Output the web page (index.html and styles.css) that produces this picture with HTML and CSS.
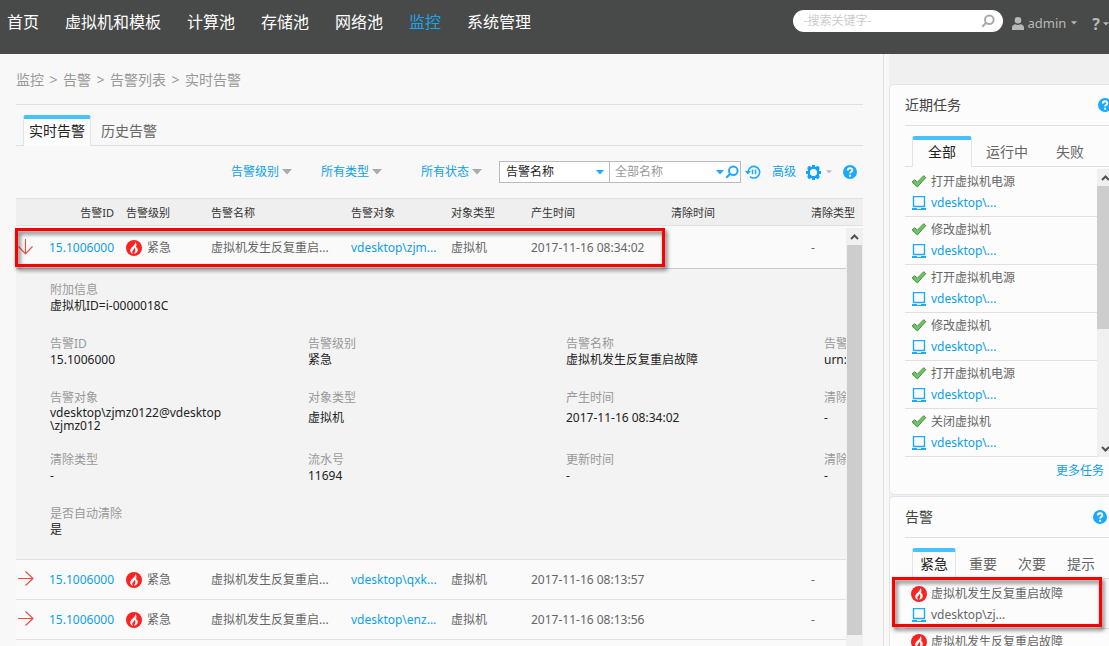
FILE: index.html
```html
<!DOCTYPE html>
<html lang="zh-CN">
<head>
<meta charset="utf-8">
<title>实时告警</title>
<link rel="stylesheet" href="styles.css">
</head>
<body>
<svg class="defs" aria-hidden="true">
  <symbol id="caret" viewBox="0 0 10 6"><path d="M0 0h10L5 5.500z" fill="currentColor"/></symbol>
  <symbol id="search" viewBox="0 0 14 14"><circle cx="8.300" cy="5.700" r="4.300" fill="none" stroke="currentColor" stroke-width="2"/><path d="M5.200 8.800 1.300 12.700" stroke="currentColor" stroke-width="2.200"/></symbol>
  <symbol id="help" viewBox="0 0 14 14"><circle cx="7" cy="7" r="7" fill="#1eaafc"/><path d="M4.800 5.500c0-3 4.600-2.900 4.600-.2 0 1.500-2.300 1.600-2.300 3.300" fill="none" stroke="#fff" stroke-width="1.800"/><path d="M6.100 9.800h2v1.900h-2z" fill="#fff"/></symbol>
  <symbol id="fire" viewBox="0 0 16 16"><circle cx="8" cy="8" r="8" fill="#fb2222"/><path d="M9.200 2c.3 1.500-.4 2.300-1.500 3.600C6 7.300 4 8.600 4.200 10.700c.1 1.600 1.200 2.700 3 3.100-1-.9-1.300-2.100-.4-3.300.7-1 1.600-1.500 1.700-2.800 1.300 1.500.9 2.500.6 3.500-.3 1-.6 1.700-1 2.600 2.400-.4 3.900-2 3.600-4.300-.1-1-.6-1.700-1-2.400-.2.700-.3 1-.7 1.300C10 6.400 11.400 4 9.200 2z" fill="#fff"/></symbol>
  <symbol id="arrow" viewBox="0 0 16 16"><path d="M0 7.500h15M7.500 0.500l7.500 7-7.500 7" fill="none" stroke="#f4473c" stroke-width="1.100"/></symbol>
  <symbol id="check" viewBox="0 0 15 13"><path d="M.6 7 3.200 4.700l2.500 2.700L12.200.700l2.100 1.800L5.900 12z" fill="#74c36a" stroke="#3f8f3b" stroke-width="1"/></symbol>
  <symbol id="laptop" viewBox="0 0 14 14"><path d="M1.500.5h11v10h-11z" fill="none" stroke="#1eaafc" stroke-width="1.400"/><path d="M0 12h5v1h4v-1h5v2H0z" fill="#1eaafc"/></symbol>
  <symbol id="chev" viewBox="0 0 9 8"><path d="M1 6l3.500-3.500L8 6" fill="none" stroke="#505050" stroke-width="2"/></symbol>
</svg>

<header class="top">
  <nav class="menu">
    <a href="#">首页</a><a href="#">虚拟机和模板</a><a href="#">计算池</a><a href="#">存储池</a><a href="#">网络池</a><a href="#" class="current">监控</a><a href="#">系统管理</a>
  </nav>
  <div class="tools">
    <div class="search">
      <input type="text" aria-label="搜索" placeholder="-搜索关键字-">
      <button aria-label="搜索"><svg width="14" height="14"><use href="#search"/></svg></button>
    </div>
    <button class="user"><svg width="12" height="13" viewBox="0 0 12 13"><circle cx="6" cy="3.300" r="3.300" fill="currentColor"/><path d="M0 13v-2.500C0 8.500 1.800 7.500 3.500 7.300c1.500 1 3.500 1 5 0 1.700.2 3.500 1.200 3.500 3.200V13z" fill="currentColor"/></svg><span>admin</span><svg width="6" height="4"><use href="#caret"/></svg></button>
    <button class="ask"><b>?</b><svg width="6" height="4"><use href="#caret"/></svg></button>
  </div>
</header>

<div class="page">
  <main class="main">
    <nav class="crumbs"><a href="#">监控</a><span>&gt;</span><a href="#">告警</a><span>&gt;</span><a href="#">告警列表</a><span>&gt;</span><a href="#">实时告警</a></nav>
    <div class="tabs"><button class="tab active">实时告警</button><button class="tab">历史告警</button></div>
    <div class="filters">
      <button class="filter">告警级别<svg width="10" height="6"><use href="#caret"/></svg></button>
      <button class="filter">所有类型<svg width="10" height="6"><use href="#caret"/></svg></button>
      <button class="filter">所有状态<svg width="10" height="6"><use href="#caret"/></svg></button>
      <div class="query">
        <div class="pick"><select aria-label="查询条件"><option>告警名称</option></select><svg width="8" height="5"><use href="#caret"/></svg></div>
        <div class="value"><input type="text" aria-label="名称" placeholder="全部名称"><svg width="8" height="5"><use href="#caret"/></svg><button aria-label="查询"><svg width="14" height="14"><use href="#search"/></svg></button></div>
      </div>
      <button class="icon refresh" aria-label="暂停刷新"><svg width="16" height="14" viewBox="0 0 16 14"><path d="M3 7a5.800 5.800 0 1 1 2 4.600" fill="none" stroke="#1eaafc" stroke-width="1.600"/><path d="M0 6h6L3 9.500z" fill="#1eaafc"/><path d="M7.500 4.500v4.800M10.500 4.500v4.800" stroke="#1eaafc" stroke-width="1.500"/></svg></button>
      <button class="link">高级</button>
      <button class="icon gear" aria-label="设置"><svg width="15" height="15" viewBox="0 0 15 15"><path fill="#0ba4fb" fill-rule="evenodd" d="M6 0h3v2h1l1-1h1l1.500 1.500V4L13 5v1h2v3h-2v1l.5 1v1.500L12 14h-1l-1-1H9v2H6v-2H5l-1 1H3l-1.500-1.500V11l.5-1V9H0V6h2V5l-.5-1V2.500L3 1h1l1 1h1zM6 4 4 6v3l2 2h3l2-2V6L9 4z"/></svg><svg width="6" height="4"><use href="#caret"/></svg></button>
      <button class="icon" aria-label="帮助"><svg width="14" height="14"><use href="#help"/></svg></button>
    </div>

    <table class="grid head">
      <colgroup><col class="c-arrow"><col class="c-id"><col class="c-level"><col class="c-name"><col class="c-obj"><col class="c-type"><col class="c-time"><col class="c-time"><col></colgroup>
      <thead><tr><th></th><th class="num">告警ID</th><th>告警级别</th><th>告警名称</th><th>告警对象</th><th>对象类型</th><th>产生时间</th><th>清除时间</th><th>清除类型</th></tr></thead>
    </table>
    <div class="body">
      <div class="rows">
        <table class="grid">
          <colgroup><col class="c-arrow"><col class="c-id"><col class="c-level"><col class="c-name"><col class="c-obj"><col class="c-type"><col class="c-time"><col class="c-time"><col></colgroup>
          <tbody>
            <tr class="open"><td class="exp"><button aria-label="收起"><svg width="16" height="16" class="down"><use href="#arrow"/></svg></button></td><td class="num"><a href="#">15.1006000</a></td><td><span class="level"><svg width="16" height="16"><use href="#fire"/></svg>紧急</span></td><td>虚拟机发生反复重启...</td><td><a href="#">vdesktop\zjm...</a></td><td>虚拟机</td><td>2017-11-16 08:34:02</td><td></td><td>-</td></tr>
            <tr class="detail"><td colspan="9">
              <dl class="facts">
                <div class="wide"><dt>附加信息</dt><dd>虚拟机ID=i-0000018C</dd></div>
                <div><dt>告警ID</dt><dd>15.1006000</dd></div>
                <div><dt>告警级别</dt><dd>紧急</dd></div>
                <div><dt>告警名称</dt><dd>虚拟机发生反复重启故障</dd></div>
                <div><dt>告警对象URN</dt><dd>urn:sites</dd></div>
                <div><dt>告警对象</dt><dd class="multi">vdesktop\zjmz0122@vdesktop<br>\zjmz012</dd></div>
                <div><dt>对象类型</dt><dd>虚拟机</dd></div>
                <div><dt>产生时间</dt><dd>2017-11-16 08:34:02</dd></div>
                <div><dt>清除时间</dt><dd>-</dd></div>
                <div><dt>清除类型</dt><dd>-</dd></div>
                <div><dt>流水号</dt><dd>11694</dd></div>
                <div><dt>更新时间</dt><dd>-</dd></div>
                <div><dt>清除用户</dt><dd>-</dd></div>
                <div><dt>是否自动清除</dt><dd>是</dd></div>
              </dl>
            </td></tr>
            <tr><td class="exp"><button aria-label="展开"><svg width="16" height="16"><use href="#arrow"/></svg></button></td><td class="num"><a href="#">15.1006000</a></td><td><span class="level"><svg width="16" height="16"><use href="#fire"/></svg>紧急</span></td><td>虚拟机发生反复重启...</td><td><a href="#">vdesktop\qxk...</a></td><td>虚拟机</td><td>2017-11-16 08:13:57</td><td></td><td>-</td></tr>
            <tr><td class="exp"><button aria-label="展开"><svg width="16" height="16"><use href="#arrow"/></svg></button></td><td class="num"><a href="#">15.1006000</a></td><td><span class="level"><svg width="16" height="16"><use href="#fire"/></svg>紧急</span></td><td>虚拟机发生反复重启...</td><td><a href="#">vdesktop\enz...</a></td><td>虚拟机</td><td>2017-11-16 08:13:56</td><td></td><td>-</td></tr>
          </tbody>
        </table>
      </div>
      <div class="bar"><svg width="9" height="8"><use href="#chev"/></svg><i class="thumb"></i></div>
      <div class="mark mark-row"></div>
    </div>
  </main>

  <aside class="side">
    <section class="card">
      <h2>近期任务<button class="icon" aria-label="帮助"><svg width="14" height="14"><use href="#help"/></svg></button></h2>
      <div class="tabs"><button class="tab active">全部</button><button class="tab">运行中</button><button class="tab">失败</button></div>
      <div class="tasks">
        <ul class="list">
          <li><p><svg width="15" height="13"><use href="#check"/></svg>打开虚拟机电源</p><p><svg width="14" height="14"><use href="#laptop"/></svg><a href="#">vdesktop\...</a></p></li>
          <li><p><svg width="15" height="13"><use href="#check"/></svg>修改虚拟机</p><p><svg width="14" height="14"><use href="#laptop"/></svg><a href="#">vdesktop\...</a></p></li>
          <li><p><svg width="15" height="13"><use href="#check"/></svg>打开虚拟机电源</p><p><svg width="14" height="14"><use href="#laptop"/></svg><a href="#">vdesktop\...</a></p></li>
          <li><p><svg width="15" height="13"><use href="#check"/></svg>修改虚拟机</p><p><svg width="14" height="14"><use href="#laptop"/></svg><a href="#">vdesktop\...</a></p></li>
          <li><p><svg width="15" height="13"><use href="#check"/></svg>打开虚拟机电源</p><p><svg width="14" height="14"><use href="#laptop"/></svg><a href="#">vdesktop\...</a></p></li>
          <li><p><svg width="15" height="13"><use href="#check"/></svg>关闭虚拟机</p><p><svg width="14" height="14"><use href="#laptop"/></svg><a href="#">vdesktop\...</a></p></li>
        </ul>
        <div class="bar"><svg width="9" height="8"><use href="#chev"/></svg><i class="thumb"></i><svg width="9" height="8" class="flip"><use href="#chev"/></svg></div>
      </div>
      <a class="more" href="#">更多任务</a>
    </section>
    <section class="card alarms">
      <h2>告警<button class="icon" aria-label="帮助"><svg width="14" height="14"><use href="#help"/></svg></button></h2>
      <div class="tabs"><button class="tab active">紧急</button><button class="tab">重要</button><button class="tab">次要</button><button class="tab">提示</button></div>
      <div class="alarm-body">
        <ul class="list">
          <li><p><svg width="16" height="16"><use href="#fire"/></svg>虚拟机发生反复重启故障</p><p><svg width="14" height="14"><use href="#laptop"/></svg>vdesktop\zj...</p></li>
          <li><p><svg width="16" height="16"><use href="#fire"/></svg>虚拟机发生反复重启故障</p></li>
        </ul>
        <div class="mark mark-alarm"></div>
      </div>
    </section>
  </aside>
</div>
</body>
</html>
```

FILE: styles.css
```css
* { box-sizing: border-box; margin: 0; padding: 0; }
body {
  height: 100vh;
  overflow: hidden;
  display: flex;
  flex-direction: column;
  background: #f8f8f8;
  color: #666;
  font: 12px/16px "Noto Sans", "Noto Sans CJK SC", sans-serif;
}
button, input, select { font: inherit; color: inherit; background: none; border: 0; outline: 0; }
button { display: flex; align-items: center; white-space: nowrap; }
svg { display: block; flex: none; }
a { color: #0e9fe6; text-decoration: none; }
ul { list-style: none; }
.defs { position: absolute; width: 0; height: 0; }

/* header */
.top { flex: none; height: 54px; display: flex; justify-content: space-between; background: #484a49; overflow: hidden; }
.menu { display: flex; gap: 26px; padding: 10px 0 0 7px; font-size: 16px; line-height: 24px; white-space: nowrap; }
.menu a { color: #fff; }
.menu .current { color: #1ba5e8; }
.tools { display: flex; align-items: flex-start; color: #b8b8b8; }
.search { width: 210px; height: 22px; margin: 10px 9px 0 0; padding: 0 8px 0 11px; display: flex; align-items: center; border-radius: 11px; background: #fff; }
.search input { flex: 1; min-width: 0; color: #666; }
.search input::placeholder { color: #ccc; opacity: 1; }
.search button { color: #aaa; }
.user { gap: 4px; margin-top: 13px; font-size: 13px; line-height: 20px; }
.user svg:last-child { margin-left: 1px; }
.ask { gap: 3px; margin: 14px 0 0 15px; font-size: 16px; line-height: 20px; }

.page { flex: 1; min-height: 0; display: flex; }
.main { flex: 1; min-width: 0; display: flex; flex-direction: column; padding: 0 20px 0 16px; border-right: 1px solid #e0e0e0; }

/* breadcrumb and tabs */
.crumbs { height: 51px; display: flex; align-items: center; gap: 5px; padding-top: 2px; border-bottom: 1px solid #e0e0e0; color: #999; font-size: 14px; }
.crumbs a { color: #999; }
.crumbs span { width: 9px; text-align: center; }
.tabs { display: flex; align-items: flex-end; margin-top: 10px; padding-left: 7px; border-bottom: 1px solid #e0e0e0; }
.tab { height: 30px; padding: 1px 10px 0; font-size: 14px; line-height: 20px; }
.tab.active { height: 31px; margin-bottom: -1px; padding: 0 5px 3px; border: 1px solid #e4e4e4; border-top: 4px solid #46c2fc; border-bottom: 0; border-radius: 3px 3px 0 0; background: #fcfcfc; color: #222; }

/* filter bar */
.filters { height: 52px; display: flex; align-items: center; justify-content: flex-end; padding-right: 6px; }
.filter { gap: 3px; margin-right: 29px; color: #0e9fe6; }
.filter svg { color: #aaa; }
.filter:nth-child(2) { margin-right: 39px; }
.filter:nth-child(3) { margin-right: 17px; }
.query { display: flex; height: 22px; border: 1px solid #b9bbc1; background: #fff; color: #1eaafc; }
.pick { width: 110px; padding: 0 5px 0 6px; display: flex; align-items: center; border-right: 1px solid #b9bbc1; }
.pick select { flex: 1; appearance: none; color: #222; }
.value { width: 130px; padding: 0 1px 0 5px; display: flex; align-items: center; }
.value input { flex: 1; min-width: 0; color: #222; }
.value input::placeholder { color: #999; opacity: 1; }
.value button { margin-left: 1px; }
.refresh { margin: 0 11px 0 4px; }
.link { color: #0e9fe6; }
.gear { gap: 5px; margin: 0 11px 0 10px; color: #bbb; }

/* alarm table */
.grid { width: 100%; table-layout: fixed; border-collapse: collapse; }
.c-arrow { width: 25px; }
.c-id { width: 80px; }
.c-level { width: 85px; }
.c-name { width: 140px; }
.c-obj { width: 100px; }
.c-type { width: 80px; }
.c-time { width: 140px; }
.grid th, .grid td { height: 40px; padding: 2px 0 0 5px; border-bottom: 1px solid #e0e0e0; text-align: left; white-space: nowrap; overflow: hidden; }
.head { flex: none; border-top: 1px solid #e0e0e0; background: #efefef; }
.grid th { height: 27px; padding-top: 1px; color: #333; font-size: 11px; font-weight: 400; }
.grid .num { padding-right: 7px; text-align: right; }
.grid .exp { padding: 0 0 0 2px; }
.body { flex: 1; min-height: 0; display: flex; position: relative; background: #fafafa; }
.rows { flex: 1; min-width: 0; overflow: hidden; }
.grid .open td { height: 42px; padding-top: 3px; border-bottom: 1px solid #ccc; }
.grid .open .exp { padding: 0 0 0 1px; }
.level { display: flex; align-items: center; gap: 5px; }
.down { transform: rotate(90deg); }
.grid .detail td { height: 291px; padding: 13px 0 0 34px; background: #f3f3f3; vertical-align: top; }
.facts { display: grid; grid-template-columns: repeat(4, 258px); row-gap: 22px; color: #222; }
.facts div { display: flex; flex-direction: column; }
.facts .wide { grid-column: 1 / -1; }
.facts dt { color: #999; }
.facts dd { flex: 1; display: flex; align-items: center; }
.facts .multi { display: block; margin-bottom: -2px; line-height: 13px; }

/* scroll bars */
.bar { flex: none; width: 17px; display: flex; flex-direction: column; align-items: center; background: #f0f0f0; padding-top: 5px; }
.thumb { width: 15px; background: #cdcdcd; }
.body .bar { margin-top: 2px; }
.body .bar .thumb { height: 390px; margin-top: 4px; }

/* side panel */
.side { flex: none; width: 220px; margin-left: 5px; padding-top: 30px; display: flex; flex-direction: column; gap: 1px; overflow: hidden; background: #f0f0f0; }
.card { flex: none; width: 230px; height: 411px; padding: 0 0 0 15px; border: 1px solid #e4e4e4; border-radius: 5px 0 0 5px; background: #fcfcfc; }
.card h2 { height: 41px; display: flex; align-items: center; justify-content: space-between; padding-right: 6px; border-bottom: 1px solid #e0e0e0; color: #444; font-size: 14px; font-weight: 400; line-height: 20px; }
.card .tab { padding: 1px 14px 0; }
.card .tab.active { padding: 0 15px 3px; }
.tasks { display: flex; margin-top: 2px; }
.list { width: 192px; }
.list li { height: 48px; padding: 2px 0 0 6px; border-bottom: 1px solid #e0e0e0; }
.list p { height: 21px; display: flex; align-items: center; gap: 4px; }
.list p svg { width: 16px; }
.tasks .bar { height: 288px; }
.tasks .thumb { width: 17px; height: 143px; margin-top: 4px; }
.flip { margin: auto 0 4px; transform: rotate(180deg); }
.more { display: block; margin: 6px 0 0 151px; }
.card.alarms { height: 420px; }
.alarms h2 { padding-right: 11px; }
.card.alarms .tab { margin-right: 1px; padding: 1px 10px 0; }
.card.alarms .tab.active { margin-right: 3px; padding: 0 7px 3px; }
.alarm-body { position: relative; }
.alarms .list { width: auto; padding-top: 2px; }

/* callout frames laid over the content */
.mark { position: absolute; border: 3px solid #fb0000; filter: drop-shadow(2px 3px 2px rgba(0, 0, 0, .6)); pointer-events: none; }
.mark-row { top: 2px; left: -1px; width: 650px; height: 39px; }
.mark-alarm { top: -2px; left: -13px; width: 210px; height: 50px; }
```
